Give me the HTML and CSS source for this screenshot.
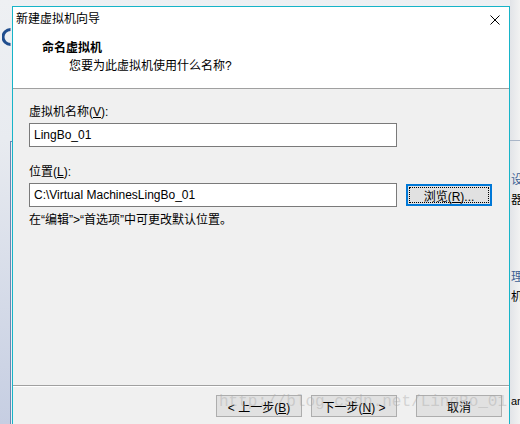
FILE: index.html
```html
<!DOCTYPE html>
<html lang="zh-CN">
<head>
    <meta charset="UTF-8">
    <title>新建虚拟机向导</title>
    <link rel="stylesheet" href="styles.css">
</head>
<body>

<div class="desktop">
    <!-- window behind the dialog -->
    <svg class="back-logo" width="10" height="20" viewBox="0 0 10 20">
        <path d="M8.5 2.5 A7.5 7.5 0 0 0 8.5 17.5" fill="none" stroke="#1f4d8e" stroke-width="3"/>
    </svg>
    <div class="back-frame"></div>
    <div class="back-right">
        <div class="back-rule"></div>
        <span class="back-word blue w1">设置</span>
        <span class="back-word w2">器</span>
        <span class="back-word blue w3">理器</span>
        <span class="back-word w4">机</span>
        <span class="back-word small w5">ar</span>
    </div>

    <div class="dialog">
        <div class="titlebar">
            <span class="title">新建虚拟机向导</span>
            <svg class="close" width="10" height="10" viewBox="0 0 10 10">
                <path d="M0.5 0.5 L9.5 9.5 M9.5 0.5 L0.5 9.5" stroke="#000" stroke-width="1"/>
            </svg>
        </div>
        <div class="header">
            <div class="header-title">命名虚拟机</div>
            <div class="header-sub">您要为此虚拟机使用什么名称?</div>
        </div>

        <div class="content">
            <label class="field-label" for="vmName">虚拟机名称(<u>V</u>):</label>
            <input class="field" id="vmName" type="text" value="LingBo_01">

            <label class="field-label second" for="vmPath">位置(<u>L</u>):</label>
            <div class="path-row">
                <input class="field" id="vmPath" type="text" value="C:\Virtual MachinesLingBo_01">
                <button class="btn browse" type="button">浏览(<u>R</u>)...</button>
            </div>
            <div class="hint">在“编辑”&gt;“首选项”中可更改默认位置。</div>
        </div>

        <div class="footer">
            <button class="btn" type="button">&lt; 上一步(<u>B</u>)</button>
            <button class="btn" type="button">下一步(<u>N</u>) &gt;</button>
            <button class="btn cancel" type="button">取消</button>
        </div>
    </div>

    <div class="watermark">http://blog.csdn.net/LingBo_01</div>
</div>

</body>
</html>
```

FILE: styles.css
```css
body {
    margin: 0;
    font-family: "Liberation Sans", "Noto Sans CJK SC", sans-serif;
    font-size: 12px;
    color: #000;
}

.desktop {
    position: relative;
    width: 520px;
    height: 424px;
    overflow: hidden;
    background: linear-gradient(to bottom, #eef0f3 0, #e8ebf0 140px, #c6cee2 424px);
}

/* background window bits */
.back-logo {
    position: absolute;
    left: 2px;
    top: 27px;
}

.back-frame {
    position: absolute;
    left: 10px;
    top: 141px;
    width: 2px;
    height: 300px;
    border-left: 1px solid #6a86b3;
    border-top: 1px solid #6a86b3;
    background: #eceef2;
}

.back-right {
    position: absolute;
    left: 510px;
    top: 0;
    width: 10px;
    height: 424px;
    overflow: hidden;
    background: linear-gradient(to right, #e2e4e8, #f2f2f2);
}

.back-rule {
    margin-top: 140px;
    height: 1px;
    background: #a9b6c8;
}

.back-word {
    position: absolute;
    left: 1px;
    font-family: "Noto Sans CJK SC", sans-serif;
    font-size: 12px;
    line-height: 14px;
    white-space: nowrap;
}

.back-word.blue {
    color: #3d5f94;
}

.back-word.small {
    font-family: "Liberation Sans", sans-serif;
    font-size: 11px;
}

.w1 { top: 172px; }
.w2 { top: 192px; }
.w3 { top: 269px; }
.w4 { top: 289px; }
.w5 { top: 394px; }

/* dialog window */
.dialog {
    position: absolute;
    left: 12px;
    top: 6px;
    width: 496px;
    height: 430px;
    border: 1px solid #17b4c8;
    background: #f0f0f0;
    display: flex;
    flex-direction: column;
}

.titlebar {
    height: 24px;
    background: #fff;
    display: flex;
    align-items: center;
    justify-content: space-between;
    padding: 0 9px 0 3px;
}

.title {
    line-height: 24px;
}

.close {
    margin-top: 1px;
}

.header {
    height: 49px;
    background: #fff;
    padding: 8px 0 0 29px;
    border-bottom: 1px solid #a0a0a0;
}

.header-title {
    font-weight: bold;
    line-height: 18px;
}

.header-sub {
    line-height: 18px;
    padding-left: 27px;
}

.content {
    height: 281px;
    padding: 15px 0 0 16px;
    display: flex;
    flex-direction: column;
    align-items: flex-start;
}

.field-label {
    line-height: 16px;
    margin-bottom: 3px;
}

.field-label.second {
    margin-top: 17px;
}

.field {
    box-sizing: border-box;
    width: 368px;
    height: 24px;
    padding: 0 4px;
    border: 1px solid #7a7a7a;
    background: #fff;
    font-family: "Liberation Sans", "Noto Sans CJK SC", sans-serif;
    font-size: 12px;
    color: #000;
    outline: none;
}

.path-row {
    display: flex;
    align-items: center;
    gap: 9px;
}

.hint {
    margin-top: 5px;
    line-height: 16px;
}

.btn {
    box-sizing: border-box;
    width: 86px;
    height: 22px;
    padding: 0;
    border: 1px solid #adadad;
    background: #e1e1e1;
    font-family: "Liberation Sans", "Noto Sans CJK SC", sans-serif;
    font-size: 12px;
    color: #000;
    position: relative;
}

.btn u {
    text-underline-offset: 1px;
}

.browse {
    border: 2px solid #0078d7;
}

.browse::after {
    content: "";
    position: absolute;
    left: 1px;
    top: 1px;
    right: 1px;
    bottom: 1px;
    border: 1px dotted #000;
}

.footer {
    border-top: 1px solid #a0a0a0;
    box-shadow: inset 0 1px 0 #fff;
    padding: 9px 7px 0 0;
    display: flex;
    justify-content: flex-end;
    gap: 9px;
    flex: 1;
}

.cancel {
    margin-left: 10px;
}

.watermark {
    position: absolute;
    left: 219px;
    top: 392px;
    font-family: "Liberation Mono", monospace;
    font-size: 16px;
    line-height: 20px;
    color: rgba(165, 165, 165, 0.4);
    white-space: nowrap;
    pointer-events: none;
}
```
